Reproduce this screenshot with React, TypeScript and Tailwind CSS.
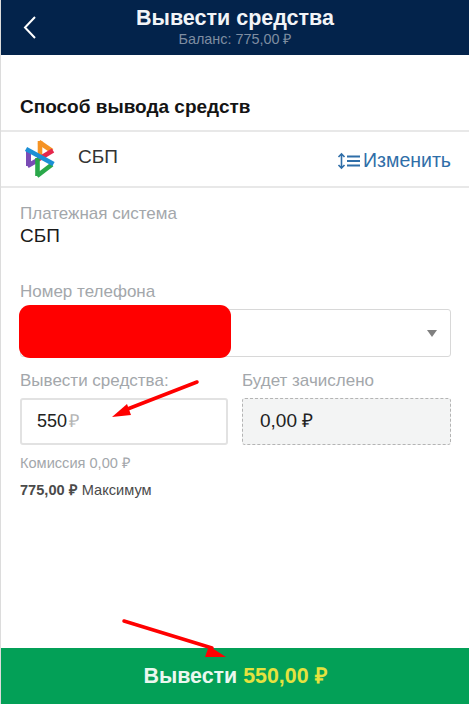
const font = { fontFamily: '"Liberation Sans", Arial, sans-serif' };

function SbpLogo() {
  return (
    <svg width="30" height="38" viewBox="0 0 30 38" className="shrink-0" fill="none" strokeWidth="4.6" strokeLinejoin="miter">
      <path d="M15 1 V17" stroke="#f59324" />
      <path d="M14 2 L27 11" stroke="#f59324" />
      <path d="M28 10.5 L13 19.5" stroke="#e5264c" />
      <path d="M3.5 10 V26" stroke="#7a4bb5" strokeWidth="5" />
      <path d="M2.5 26 L12 20.5" stroke="#7a4bb5" />
      <path d="M12.5 18 V36" stroke="#2aa84a" />
      <path d="M12 36 L27 24.5" stroke="#2aa84a" />
      <path d="M1 9 L28.5 24" stroke="#1c8fd6" />
    </svg>
  );
}

export default function App() {
  return (
    <div style={font} className="relative flex h-[704px] w-[469px] flex-col overflow-hidden border-l border-[#dcdcdc] bg-white">
      <header className="relative flex h-[55px] shrink-0 flex-col items-center bg-[#03234b] pt-[5px] text-center">
        <svg width="16" height="26" viewBox="0 0 16 26" className="absolute left-[21px] top-[14px]" fill="none" stroke="#ffffff" strokeWidth="2">
          <path d="M13 3 L3 13.5 L13 24" />
        </svg>
        <h1 className="text-[21.5px] leading-[26px] font-bold text-[#f2f4f7]">Вывести средства</h1>
        <p className="text-[14.4px] leading-[16px] text-[#7e8da1]">Баланс: 775,00 ₽</p>
      </header>

      <h2 className="mt-[42px] pl-[19px] text-[19px] leading-[20px] font-bold text-[#141414]">Способ вывода средств</h2>

      <div className="mt-[13px] flex h-[58px] items-center border-y-2 border-[#e8e8e8] pr-[18px] pl-[24px]">
        <SbpLogo />
        <span className="ml-[23px] pb-[3px] text-[19px] text-[#333333]">СБП</span>
        <div className="ml-auto flex items-center gap-[2px] pt-[3px] text-[19.5px] text-[#2f6ea8]">
          <svg width="24" height="18" viewBox="0 0 24 18" fill="none" stroke="#2f6ea8" strokeWidth="1.6">
            <path d="M4.5 2 V16 M1.5 5 L4.5 1.8 L7.5 5 M1.5 13 L4.5 16.2 L7.5 13" />
            <path d="M10 4.5 H23 M10 9 H23 M10 13.5 H23" strokeWidth="2" />
          </svg>
          <span>Изменить</span>
        </div>
      </div>

      <div className="flex flex-1 flex-col pr-[18px] pl-[19px]">
        <p className="mt-[16px] text-[17px] leading-[20px] text-[#a3a7ab]">Платежная система</p>
        <p className="mt-[1px] text-[19px] leading-[22px] text-[#1a1a1a]">СБП</p>

        <p className="mt-[35px] text-[17px] leading-[20px] text-[#a3a7ab]">Номер телефона</p>
        <div className="relative mt-[7px] flex h-[48px] items-center justify-end rounded-[3px] border border-[#d8d8d8] pr-[13px]">
          <span className="h-0 w-0 border-x-[5px] border-t-[7px] border-x-transparent border-t-[#808080]" />
          <div className="absolute top-[-5px] left-[-2px] h-[53px] w-[212px] rounded-[11px] bg-[#ff0000]" />
        </div>

        <div className="mt-[14px] grid grid-cols-[208px_209px] gap-x-[14px]">
          <div>
            <p className="text-[17px] leading-[20px] text-[#a3a7ab]">Вывести средства:</p>
            <div className="mt-[7px] flex h-[47px] items-center rounded-[3px] border-2 border-[#e2e2e2] pl-[15px] text-[18px] text-[#222222]">
              550<span className="ml-[2px] text-[#b5b5b5]">₽</span>
            </div>
          </div>
          <div>
            <p className="text-[17px] leading-[20px] text-[#a3a7ab]">Будет зачислено</p>
            <div className="mt-[7px] flex h-[47px] items-center rounded-[3px] border border-dashed border-[#b4b4b4] bg-[#f3f4f4] pl-[17px] text-[19px] text-[#222222]">
              0,00 ₽
            </div>
          </div>
        </div>

        <p className="mt-[10px] text-[14.6px] leading-[16px] text-[#a3a7ab]">Комиссия 0,00 ₽</p>
        <p className="mt-[11px] text-[14.6px] leading-[16px] text-[#4a4a4a]">
          <span className="font-bold">775,00 ₽</span> Максимум
        </p>
      </div>

      <button className="flex h-[56px] shrink-0 items-center justify-center bg-[#03a057] text-[21.4px] font-bold text-[#eaf7ef]">
        Вывести&nbsp;<span className="text-[#e5e23f]">550,00 ₽</span>
      </button>

      {/* red annotation arrows drawn on top of the screenshot */}
      <svg width="469" height="704" viewBox="0 0 469 704" className="pointer-events-none absolute top-0 left-[-1px]">
        <path d="M197 382 L125 410" stroke="#ff0000" strokeWidth="3.5" strokeLinecap="round" />
        <path d="M112 417 L127 404 L131 415 Z" fill="#ff0000" />
        <path d="M124 621 L212 648" stroke="#ff0000" strokeWidth="3.5" strokeLinecap="round" />
        <path d="M226 657 L205 657 L209 646 Z" fill="#ff0000" />
      </svg>
    </div>
  );
}
